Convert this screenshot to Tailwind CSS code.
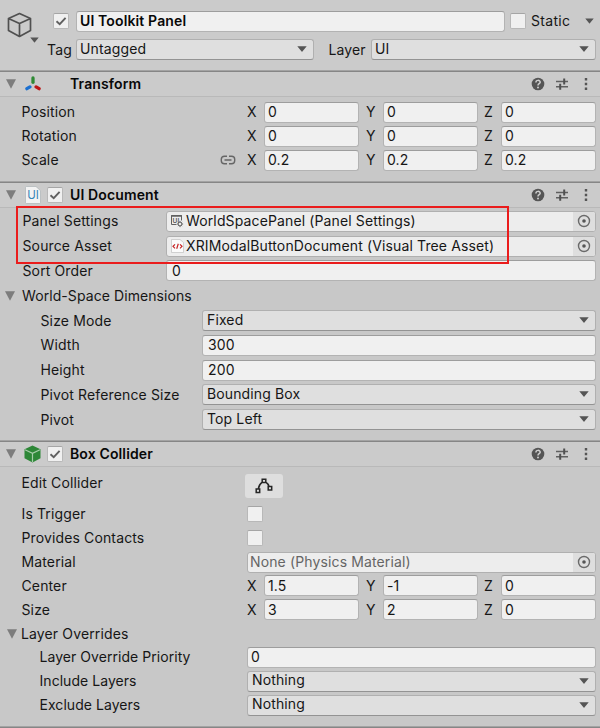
<!DOCTYPE html>
<html lang="en">
<head>
<meta charset="utf-8">
<title>Inspector</title>
<script src="https://cdn.jsdelivr.net/npm/@tailwindcss/browser@4"></script>
</head>
<body class="bg-[#c8c8c8]">
<svg class="hidden">
  <symbol id="down" viewBox="0 0 10 6"><path d="M.3.3h9.4L5.4 5.4q-.4.5-.8 0z" fill="#555"/></symbol>
  <symbol id="fold" viewBox="0 0 10 10"><path d="M0 .3h10L5 9.8z" fill="#7d7d7d"/></symbol>
  <symbol id="check" viewBox="0 0 12 12"><path d="M1.500 6.300 4.700 9.200 10.600 2.800" fill="none" stroke="#606060" stroke-width="1.900"/></symbol>
  <symbol id="help" viewBox="0 0 14 14"><circle cx="7" cy="7" r="6.300" fill="#555"/><path d="M4.900 5.500c0-2.800 4.300-2.800 4.300-.2C9.200 6.800 7 6.700 7 8.500" fill="none" stroke="#d0d0d0" stroke-width="1.500"/><circle cx="7" cy="10.500" r=".95" fill="#d0d0d0"/></symbol>
  <symbol id="preset" viewBox="0 0 14 14"><path d="M1 4.500h8M9 4.500h4M1 9.800h4M5 9.800h8" fill="none" stroke="#606060" stroke-width="1.400"/><path d="M9.200 1.500v6M5.200 6.800v6" stroke="#505050" stroke-width="2"/></symbol>
  <symbol id="more" viewBox="0 0 4 14"><path d="M.8 1h2.400v2.400H.8zM.8 5.800h2.400v2.400H.8zM.8 10.600h2.400V13H.8z" fill="#555"/></symbol>
  <symbol id="target" viewBox="0 0 14 14"><circle cx="7" cy="7" r="5.500" fill="none" stroke="#6a6a6a" stroke-width="1.400"/><circle cx="7" cy="7" r="1.800" fill="#555"/></symbol>
</svg>
<main id="panel" class="flex h-[728px] w-[600px] flex-col overflow-hidden bg-[#c8c8c8] font-['Inter',sans-serif] text-[14px] leading-[20px] tracking-[0.13px] text-[#161616]"></main>
<script>
const box = 'flex h-[21px] min-w-0 flex-1 items-center rounded-[3px] border ';
const input = (v, cls = '') => `<div class="${box} border-[#b3b3b3] border-t-[#9d9d9d] bg-[#f0f0f0] pl-[3px] ${cls}">${v}</div>`;
const select = (v, cls = 'pl-[4px]') => `<div class="${box} justify-between border-[#b0b0b0] border-b-[#939393] bg-[#dfdfdf] pr-[6px] ${cls}"><span class="-mt-[2px]">${v}</span><svg class="-mt-px h-[6px] w-[10px]"><use href="#down"/></svg></div>`;
const object = (icon, v, cls = '') => `<div class="${box} overflow-hidden border-[#b0b0b0] bg-[#ededed] ${cls}">${icon}<span class="flex-1 whitespace-nowrap">${v}</span><span class="flex h-full w-[22px] items-center justify-center bg-[#dedede]"><svg class="size-[14px]"><use href="#target"/></svg></span></div>`;
const vec = (x, y, z) => `<div class="flex flex-1 items-center">
  <span class="w-[17px]">X</span><div class="flex w-[95px]">${input(x)}</div>
  <span class="ml-[7px] w-[17px]">Y</span><div class="flex w-[95px]">${input(y)}</div>
  <span class="ml-[6px] w-[17px]">Z</span><div class="flex w-[95px]">${input(z)}</div></div>`;
const toggle = on => `<span class="flex size-[16px] items-center justify-center rounded-[2px] border border-[#b8b8b8] border-t-[#a5a5a5] bg-[#f0f0f0]">${on ? '<svg class="size-[12px]"><use href="#check"/></svg>' : ''}</span>`;
const foldout = '<svg class="size-[10px]"><use href="#fold"/></svg>';
const header = (icon, check, title) => `<div class="h-[2px] shrink-0 border-t border-[#a3a3a3] bg-[#868686]"></div>
<div class="flex h-[25px] shrink-0 items-center border-b border-[#b9b9b9] bg-[#cbcbcb] pr-[12px] pb-px pl-[6px]">
  ${foldout}<span class="ml-[8px] flex w-[17px] justify-center">${icon}</span><span class="ml-[6px] flex w-[16px]">${check}</span>
  <b class="ml-[7px] flex-1 font-semibold text-[#080808]">${title}</b>
  <svg class="size-[14px]"><use href="#help"/></svg><svg class="ml-[10px] size-[14px]"><use href="#preset"/></svg><svg class="ml-[15px] h-[14px] w-[4px]"><use href="#more"/></svg></div>`;
const r24 = (l, c) => `<div class="flex h-[24px] items-center pr-[4px] pl-[21.500px]"><span class="w-[226px]">${l}</span>${c}</div>`;
const rDoc = (l, c) => `<div class="flex h-[24.800px] items-center pr-[4px] pl-[22.500px]"><span class="w-[143.500px]">${l}</span>${c}</div>`;
const rSub = (l, c) => `<div class="flex h-[24.800px] items-center pr-[4px] pl-[40.500px]"><span class="w-[161.500px]">${l}</span>${c}</div>`;
const rBox = (l, c) => `<div class="flex h-[23.850px] items-center pr-[4px] pl-[21.500px]"><span class="w-[225.500px]">${l}</span>${c}</div>`;
const rBoxSub = (l, c) => `<div class="flex h-[23.850px] items-center pr-[4px] pl-[39.500px]"><span class="w-[207.500px] tracking-[0.050px]">${l}</span>${c}</div>`;

const axes = `<svg class="size-[16px]" viewBox="0 0 16 16" fill="none" stroke-width="3.300" stroke-linecap="round"><path d="M8 2v4.300" stroke="#2f8a35"/><path d="m4.900 10.900-3 1.800" stroke="#1c70d0"/><path d="m11.100 10.900 3 1.800" stroke="#bd1717"/></svg>`;
const doc = `<svg class="h-[18px] w-[16px]" viewBox="0 0 16 18"><path d="M1.500.5h9.500l4.500 4.200v11.800q0 1-1 1h-13q-1 0-1-1v-15q0-1 1-1z" fill="#f3f3f3" stroke="#aeb4b8" stroke-width=".7"/><text x="2.300" y="13.300" font-size="11.500" letter-spacing="0" fill="#3886b8">UI</text></svg>`;
const cube = `<svg class="h-[18px] w-[17px]" viewBox="0 0 17 18"><path d="m8.500.5 8 3.800v9l-8 4.300-8-4.300v-9z" fill="#2d8737"/><path d="m1 4.700 7.500 3.600L16 4.700M8.500 8.300V17" fill="none" stroke="#a6cda9" stroke-width="1.200"/></svg>`;
const settings = `<svg class="mr-[2px] ml-[3px] h-[14px] w-[14px] shrink-0" viewBox="0 0 14 14" fill="none" stroke="#606060"><path d="M6.500 10.500H1.500v-9h10v5" stroke-width="1"/><path d="M1 2h11" stroke-width="1.600"/><text x="2.600" y="8.900" font-size="6.500" font-weight="600" letter-spacing="0" stroke="none" fill="#555">UI</text><circle cx="10" cy="10" r="1.900" stroke-width="1"/><path d="M10 6.900v1M10 12.100v1M6.900 10h1M12.100 10h1M7.900 7.900l.7.7M12.100 7.900l-.7.700M7.900 12.100l.7-.7M12.100 12.100l-.7-.7" stroke-width="1"/></svg>`;
const tree = `<svg class="mr-[2px] ml-[4px] h-[14px] w-[13px] shrink-0" viewBox="0 0 13 14"><path d="M.5.500h8.500l3.500 3v10H.5z" fill="#fbfbfb" stroke="#c0c0c0" stroke-width=".7"/><path d="M4 5.300 2 7.300l2 2M9 5.300l2 2-2 2M7.300 4.800 5.700 9.800" fill="none" stroke="#c62525" stroke-width="1.200"/></svg>`;
const link = `<svg class="h-[10px] w-[16px]" viewBox="0 0 16 10" fill="none" stroke="#666" stroke-width="1.400"><path d="M7 1.200H4.500Q1.300 1.200 1.300 4.200v1.600q0 3 3.200 3H7M9 1.200h2.500q3.200 0 3.200 3v1.600q0 3-3.200 3H9M4.500 5h7"/></svg>`;
const nodes = `<svg class="h-[16px] w-[18px]" viewBox="0 0 18 16" fill="none" stroke="#252525" stroke-width="1.500"><path d="M7.200 1.200h3.600v3.200H7.200zM1.200 11h3.500v3.500H1.200zM13.200 8.500h3.500V12h-3.500zM7.200 4.200Q4 6.500 3.300 11M10.800 4.200q2.400 1.500 3.200 4.300"/></svg>`;

document.getElementById('panel').innerHTML = `
<section class="flex h-[70px] shrink-0 bg-[#cbcbcb] pt-[10px] pr-[4px] pl-[7px]">
  <div class="relative w-[40px]">
    <svg class="mt-[2px] h-[26px] w-[25px]" viewBox="0 0 25 26" fill="none" stroke="#505050" stroke-width="1.700" stroke-linejoin="round"><path d="m12.500 1.500 11 5v12l-11 6-11-6v-12zM1.500 6.500l11 5 11-5M12.500 11.500v13"/></svg>
    <svg class="absolute top-[26.500px] left-[23px] h-[6px] w-[9px]"><use href="#down"/></svg>
  </div>
  <div class="flex flex-1 flex-col gap-[7px]">
    <div class="flex h-[22px] items-center">
      <span class="ml-[6px] w-[23px]">${toggle(true)}</span>
      <div class="flex w-[429px] font-semibold text-[#080808]">${input('UI Toolkit Panel')}</div>
      <span class="ml-[5px]">${toggle(false)}</span><span class="ml-[5px] flex-1 tracking-[0.300px]">Static</span>
      <svg class="mr-[2px] h-[6px] w-[9px]"><use href="#down"/></svg>
    </div>
    <div class="flex h-[21px] items-center">
      <span class="w-[29px]">Tag</span><div class="flex w-[237.500px]">${select('Untagged', 'pl-[3px]')}</div>
      <span class="ml-[15px] w-[42.500px]">Layer</span>${select('UI', 'pl-[3px]')}
    </div>
  </div>
</section>
<section class="flex h-[111px] shrink-0 flex-col">
  ${header(axes, '', 'Transform')}
  <div class="pt-[3px]">
  ${r24('Position', vec('0', '0', '0'))}
  ${r24('Rotation', vec('0', '0', '0'))}
  ${r24(`<span class="flex items-center justify-between pr-[11px]">Scale${link}</span>`, vec('0.2', '0.2', '0.2'))}
  </div>
</section>
<section class="relative flex h-[259px] shrink-0 flex-col">
  ${header(doc, toggle(true), 'UI Document')}
  <div class="pt-[1px]">
  ${rDoc('Panel Settings', object(settings, 'WorldSpacePanel (Panel Settings)'))}
  ${rDoc('Source Asset', object(tree, 'XRIModalButtonDocument (Visual Tree Asset)'))}
  ${rDoc('Sort Order', input('0', 'pl-[5px]'))}
  <div class="flex h-[24.800px] items-center pl-[5px]">${foldout}<span class="ml-[7px] tracking-[0.080px]">World-Space Dimensions</span></div>
  ${rSub('Size Mode', select('Fixed'))}
  ${rSub('Width', input('300', 'pl-[5px]'))}
  ${rSub('Height', input('200', 'pl-[5px]'))}
  ${rSub('Pivot Reference Size', select('Bounding Box'))}
  ${rSub('Pivot', select('Top Left'))}
  </div>
  <div class="absolute top-[25px] left-[16px] h-[58px] w-[493px] border-2 border-[#ea1c1c]"></div>
</section>
<section class="flex h-[286px] shrink-0 flex-col">
  ${header(cube, toggle(true), 'Box Collider')}
  <div class="flex h-[35.400px] shrink-0 pt-[6.500px] pl-[21.500px]"><span class="-mt-px w-[223.500px]">Edit Collider</span><span class="flex h-[24px] w-[38px] items-center justify-center rounded-[3px] bg-[#dedede]">${nodes}</span></div>
  ${rBox('Is Trigger', toggle(false))}
  ${rBox('Provides Contacts', toggle(false))}
  ${rBox('Material', object('', 'None (Physics Material)', 'pl-[2px] text-[#656565]'))}
  ${rBox('Center', vec('1.5', '-1', '0'))}
  ${rBox('Size', vec('3', '2', '0'))}
  <div class="flex h-[23.850px] items-center pl-[7px]">${foldout}<span class="ml-[4px]">Layer Overrides</span></div>
  ${rBoxSub('Layer Override Priority', input('0', 'pl-[2px]'))}
  ${rBoxSub('Include Layers', select('Nothing'))}
  ${rBoxSub('Exclude Layers', select('Nothing'))}
</section>
<div class="h-[2px] shrink-0 border-t border-[#a3a3a3] bg-[#868686]"></div>`;
</script>
</body>
</html>
